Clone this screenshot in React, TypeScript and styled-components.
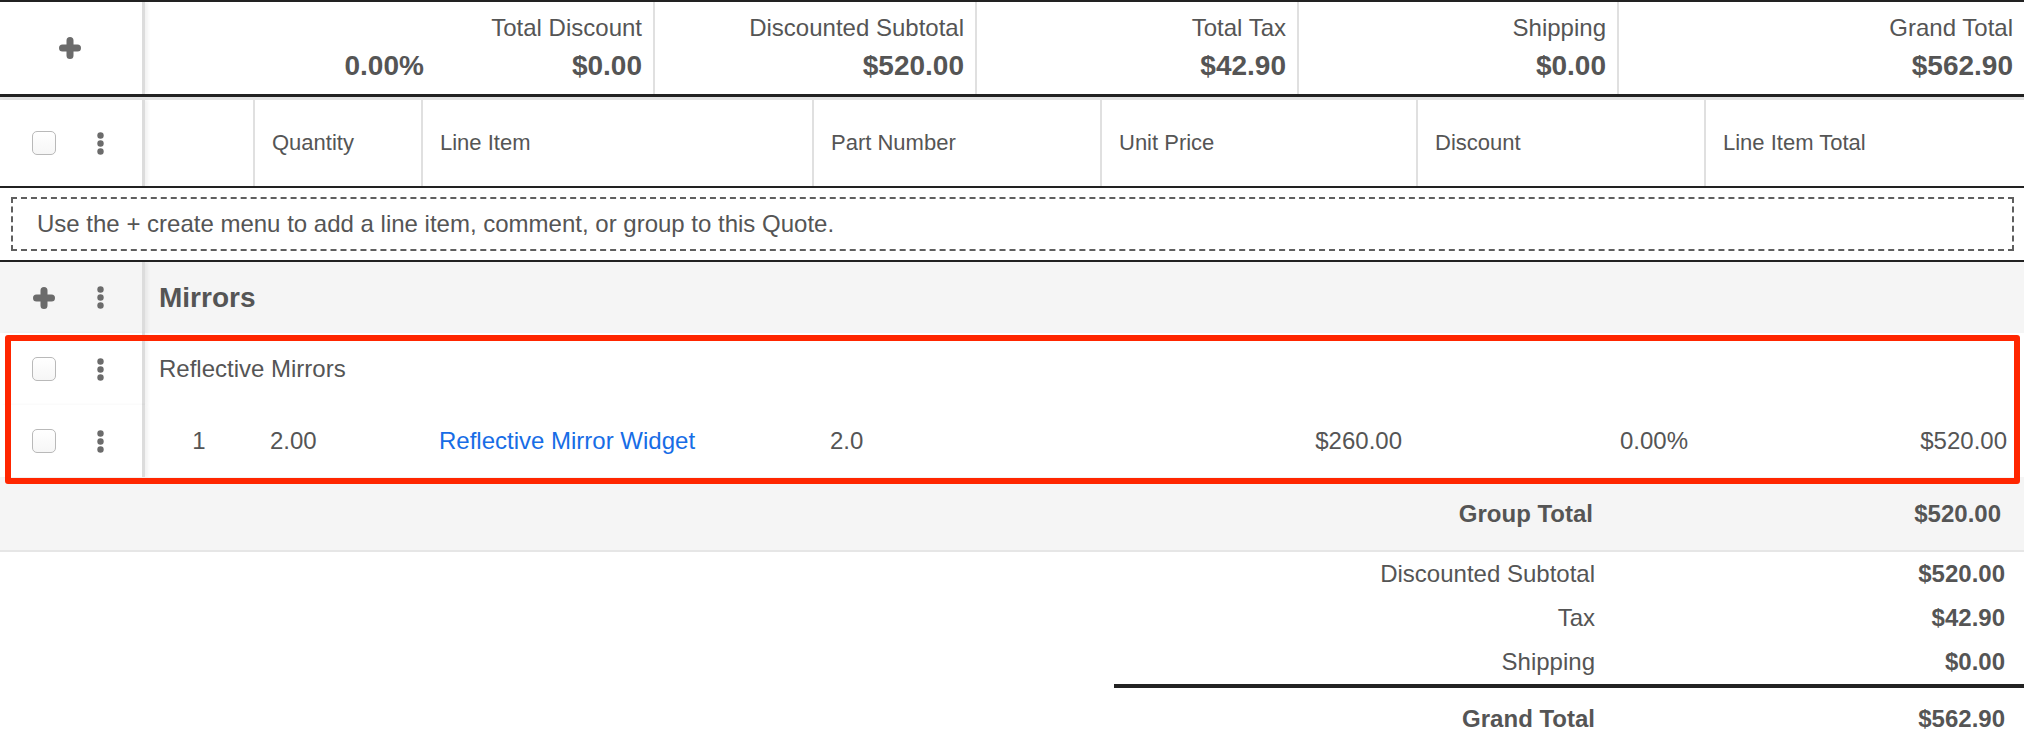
import styled, { createGlobalStyle } from 'styled-components';

const GlobalStyle = createGlobalStyle`
  * { box-sizing: border-box; }
  html, body {
    margin: 0;
    padding: 0;
    background: #fff;
  }
  body {
    font-family: 'Liberation Sans', Arial, Helvetica, sans-serif;
    color: #555;
    overflow: hidden;
  }
`;

// column grid shared by the header and the line item rows
const COLUMNS = '145px 108px 168px 391px 288px 316px 288px 1fr';

const Sheet = styled.div`
  width: 2024px;
`;

const SummaryBar = styled.div`
  display: grid;
  grid-template-columns: 145px 508px 322px 322px 320px 1fr;
  height: 97px;
  border-top: 2px solid #222;
  border-bottom: 3px solid #222;
`;

const ControlCell = styled.div<{ $centered?: boolean; $shaded?: boolean }>`
  display: flex;
  align-items: center;
  justify-content: ${({ $centered }) => ($centered ? 'center' : 'flex-start')};
  padding-left: ${({ $centered }) => ($centered ? '0' : '16px')};
  padding-right: ${({ $centered }) => ($centered ? '3px' : '0')};
  background: ${({ $shaded }) => ($shaded ? '#f5f5f5' : '#fff')};
  border-right: 3px solid #dcdcdc;
  box-shadow: 3px 0 3px rgba(0, 0, 0, 0.05);
  position: relative;
`;

const Slot = styled.div`
  width: 56px;
  display: flex;
  align-items: center;
  justify-content: center;
`;

const SummaryCell = styled.div<{ $divider?: boolean }>`
  display: flex;
  flex-direction: column;
  justify-content: center;
  align-items: flex-end;
  padding: 0 11px;
  border-left: ${({ $divider }) => ($divider ? '2px solid #e0e0e0' : 'none')};
`;

const SummaryLabel = styled.div`
  font-size: 24px;
  line-height: 32px;
`;

const ValueRow = styled.div`
  display: flex;
  gap: 148px;
  margin-top: 4px;
`;

const SummaryValue = styled.div<{ $spaced?: boolean }>`
  font-size: 28px;
  line-height: 36px;
  font-weight: 700;
  margin-top: ${({ $spaced }) => ($spaced ? '4px' : '0')};
`;

const HeaderRow = styled.div`
  display: grid;
  grid-template-columns: ${COLUMNS};
  height: 91px;
  border-top: 3px solid #e3e3e3;
  border-bottom: 2px solid #222;
`;

const HeadCell = styled.div<{ $divider?: boolean }>`
  display: flex;
  align-items: center;
  padding-left: 17px;
  font-size: 22px;
  border-left: ${({ $divider }) => ($divider ? '2px solid #e0e0e0' : 'none')};
`;

const InfoRow = styled.div`
  height: 74px;
  padding: 9px 10px 9px 11px;
  border-bottom: 2px solid #222;
`;

const DashedBox = styled.div`
  height: 100%;
  display: flex;
  align-items: center;
  padding-left: 24px;
  border: 2px dashed #5f5f5f;
  font-size: 24px;
`;

const GroupBlock = styled.div`
  background: #f5f5f5;
`;

const GroupHeader = styled.div`
  display: grid;
  grid-template-columns: 145px 1fr;
  height: 71px;
`;

const GroupName = styled.div`
  display: flex;
  align-items: center;
  padding-left: 14px;
  font-size: 28px;
  font-weight: 700;
`;

const RowsWrap = styled.div`
  position: relative;
`;

const Highlight = styled.div`
  position: absolute;
  top: 2px;
  left: 5px;
  right: 4px;
  bottom: -7px;
  border: 6px solid #ff2600;
  border-radius: 3px;
  pointer-events: none;
  z-index: 2;
`;

const ItemRow = styled.div`
  display: grid;
  grid-template-columns: ${COLUMNS};
  height: 72px;
  background: #fff;
`;

const DataCell = styled.div<{ $align?: 'left' | 'center' | 'right'; $pad?: number; $span?: boolean }>`
  display: flex;
  align-items: center;
  justify-content: ${({ $align }) =>
    $align === 'right' ? 'flex-end' : $align === 'center' ? 'center' : 'flex-start'};
  padding-left: ${({ $align, $pad }) => ($align === 'left' || !$align ? `${$pad ?? 17}px` : '0')};
  padding-right: ${({ $align, $pad }) => ($align === 'right' ? `${$pad ?? 16}px` : '0')};
  grid-column: ${({ $span }) => ($span ? '2 / -1' : 'auto')};
  font-size: 24px;
`;

const ItemLink = styled.a`
  color: #176de6;
  text-decoration: none;
`;

const TotalRow = styled.div<{ $height: number; $bold?: boolean }>`
  display: grid;
  grid-template-columns: 1fr 407px;
  align-items: center;
  height: ${({ $height }) => $height}px;
  font-size: 24px;
  font-weight: ${({ $bold }) => ($bold ? 700 : 400)};
`;

const GroupTotalRow = styled(TotalRow)`
  border-bottom: 2px solid #e6e6e6;
`;

const TotalLabel = styled.div<{ $pad: number }>`
  text-align: right;
  padding-right: ${({ $pad }) => $pad}px;
`;

const TotalValue = styled.div<{ $pad: number }>`
  text-align: right;
  font-weight: 700;
  padding-right: ${({ $pad }) => $pad}px;
`;

const Rule = styled.div`
  margin-left: 1114px;
  height: 4px;
  background: #222;
`;

const Checkbox = styled.span`
  display: block;
  width: 24px;
  height: 24px;
  border: 1.5px solid #b9b9b9;
  border-radius: 5px;
  background: linear-gradient(#fff, #f6f6f6);
`;

const PlusIcon = () => (
  <svg width="22" height="22" viewBox="0 0 22 22">
    <path d="M11 3.5v15M3.5 11h15" stroke="#6b6b6b" strokeWidth="7" strokeLinecap="round" />
  </svg>
);

const KebabIcon = () => (
  <svg width="7" height="23" viewBox="0 0 7 23">
    <circle cx="3.5" cy="3.5" r="3.2" fill="#6b6b6b" />
    <circle cx="3.5" cy="11.5" r="3.2" fill="#6b6b6b" />
    <circle cx="3.5" cy="19.5" r="3.2" fill="#6b6b6b" />
  </svg>
);

const summary = [
  { label: 'Discounted Subtotal', value: '$520.00' },
  { label: 'Total Tax', value: '$42.90' },
  { label: 'Shipping', value: '$0.00' },
  { label: 'Grand Total', value: '$562.90' },
];

const headers = ['Quantity', 'Line Item', 'Part Number', 'Unit Price', 'Discount', 'Line Item Total'];

const footerLines = [
  { label: 'Discounted Subtotal', value: '$520.00' },
  { label: 'Tax', value: '$42.90' },
  { label: 'Shipping', value: '$0.00' },
];

export default function App() {
  return (
    <>
      <GlobalStyle />
      <Sheet>
        <SummaryBar>
          <ControlCell $centered>
            <PlusIcon />
          </ControlCell>
          <SummaryCell>
            <SummaryLabel>Total Discount</SummaryLabel>
            <ValueRow>
              <SummaryValue>0.00%</SummaryValue>
              <SummaryValue>$0.00</SummaryValue>
            </ValueRow>
          </SummaryCell>
          {summary.map((s) => (
            <SummaryCell key={s.label} $divider>
              <SummaryLabel>{s.label}</SummaryLabel>
              <SummaryValue $spaced>{s.value}</SummaryValue>
            </SummaryCell>
          ))}
        </SummaryBar>

        <HeaderRow>
          <ControlCell>
            <Slot><Checkbox /></Slot>
            <Slot><KebabIcon /></Slot>
          </ControlCell>
          <HeadCell />
          {headers.map((h) => (
            <HeadCell key={h} $divider>{h}</HeadCell>
          ))}
        </HeaderRow>

        <InfoRow>
          <DashedBox>Use the + create menu to add a line item, comment, or group to this Quote.</DashedBox>
        </InfoRow>

        <GroupBlock>
          <GroupHeader>
            <ControlCell $shaded>
              <Slot><PlusIcon /></Slot>
              <Slot><KebabIcon /></Slot>
            </ControlCell>
            <GroupName>Mirrors</GroupName>
          </GroupHeader>

          <RowsWrap>
            <ItemRow>
              <ControlCell>
                <Slot><Checkbox /></Slot>
                <Slot><KebabIcon /></Slot>
              </ControlCell>
              <DataCell $span $pad={14}>Reflective Mirrors</DataCell>
            </ItemRow>
            <ItemRow>
              <ControlCell>
                <Slot><Checkbox /></Slot>
                <Slot><KebabIcon /></Slot>
              </ControlCell>
              <DataCell $align="center">1</DataCell>
              <DataCell>2.00</DataCell>
              <DataCell $pad={18}><ItemLink href="#">Reflective Mirror Widget</ItemLink></DataCell>
              <DataCell $pad={18}>2.0</DataCell>
              <DataCell $align="right" $pad={14}>$260.00</DataCell>
              <DataCell $align="right" $pad={16}>0.00%</DataCell>
              <DataCell $align="right" $pad={17}>$520.00</DataCell>
            </ItemRow>
            <Highlight />
          </RowsWrap>

          <GroupTotalRow $height={75} $bold>
            <TotalLabel $pad={24}>Group Total</TotalLabel>
            <TotalValue $pad={23}>$520.00</TotalValue>
          </GroupTotalRow>
        </GroupBlock>

        {footerLines.map((f) => (
          <TotalRow key={f.label} $height={44}>
            <TotalLabel $pad={22}>{f.label}</TotalLabel>
            <TotalValue $pad={19}>{f.value}</TotalValue>
          </TotalRow>
        ))}
        <Rule />
        <TotalRow $height={62} $bold>
          <TotalLabel $pad={22}>Grand Total</TotalLabel>
          <TotalValue $pad={19}>$562.90</TotalValue>
        </TotalRow>
      </Sheet>
    </>
  );
}
